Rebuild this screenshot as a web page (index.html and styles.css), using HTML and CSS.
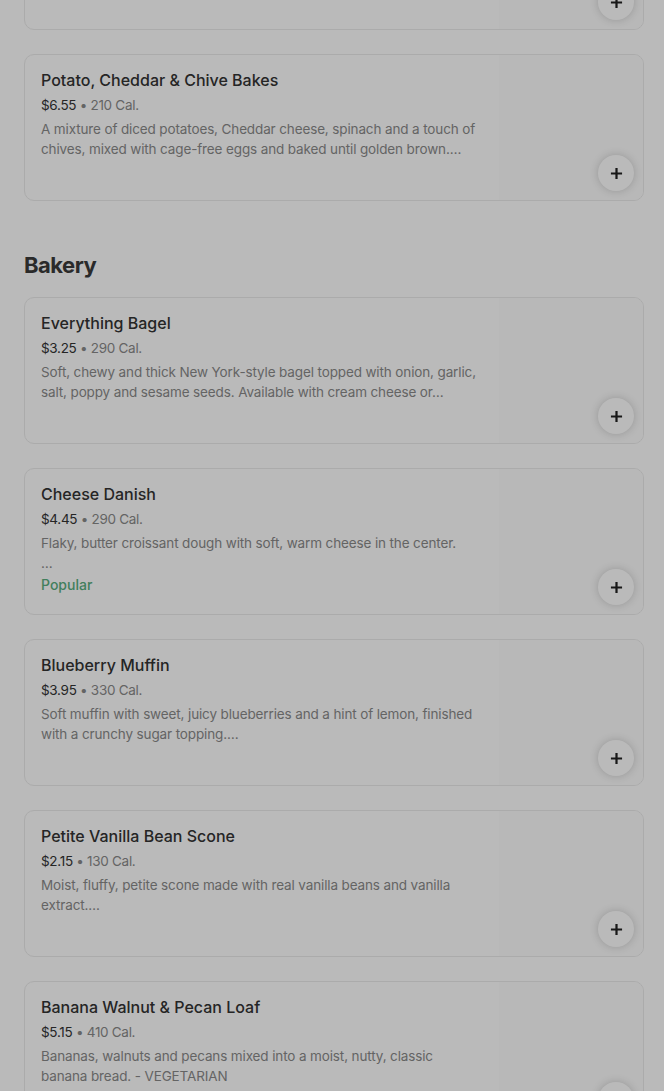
FILE: index.html
```html
<!DOCTYPE html>
<html lang="en">
<head>
  <meta charset="UTF-8">
  <meta name="viewport" content="width=device-width, initial-scale=1.0">
  <title>Menu</title>
  <link rel="stylesheet" href="styles.css">
</head>
<body>
  <main class="menu">
    <!-- Previous section, scrolled mostly out of view -->
    <section class="menu-section scrolled">
      <div class="item-card">
        <div class="item-info">
          <h3 class="item-name">Spinach, Feta &amp; Egg White Wrap</h3>
          <div class="item-meta"><span class="price">$5.25</span> &bull; 290 Cal.</div>
          <p class="item-desc">Cage-free egg whites with spinach, feta cheese and tomatoes in a whole-wheat wrap.…</p>
        </div>
        <div class="item-image"></div>
        <button class="add-btn" aria-label="Add"><svg viewBox="0 0 14 14"><path d="M7 1v12M1 7h12"/></svg></button>
      </div>

      <div class="item-card">
        <div class="item-info">
          <h3 class="item-name">Potato, Cheddar &amp; Chive Bakes</h3>
          <div class="item-meta"><span class="price">$6.55</span> &bull; 210 Cal.</div>
          <p class="item-desc">A mixture of diced potatoes, Cheddar cheese, spinach and a touch of chives, mixed with cage-free eggs and baked until golden brown.…</p>
        </div>
        <div class="item-image"></div>
        <button class="add-btn" aria-label="Add"><svg viewBox="0 0 14 14"><path d="M7 1v12M1 7h12"/></svg></button>
      </div>
    </section>

    <section class="menu-section">
      <h2 class="section-title">Bakery</h2>

      <div class="item-card">
        <div class="item-info">
          <h3 class="item-name">Everything Bagel</h3>
          <div class="item-meta"><span class="price">$3.25</span> &bull; 290 Cal.</div>
          <p class="item-desc">Soft, chewy and thick New York-style bagel topped with onion, garlic, salt, poppy and sesame seeds. Available with cream cheese or…</p>
        </div>
        <div class="item-image"></div>
        <button class="add-btn" aria-label="Add"><svg viewBox="0 0 14 14"><path d="M7 1v12M1 7h12"/></svg></button>
      </div>

      <div class="item-card">
        <div class="item-info">
          <h3 class="item-name">Cheese Danish</h3>
          <div class="item-meta"><span class="price">$4.45</span> &bull; 290 Cal.</div>
          <p class="item-desc">Flaky, butter croissant dough with soft, warm cheese in the center.<br>…</p>
          <div class="tag">Popular</div>
        </div>
        <div class="item-image"></div>
        <button class="add-btn" aria-label="Add"><svg viewBox="0 0 14 14"><path d="M7 1v12M1 7h12"/></svg></button>
      </div>

      <div class="item-card">
        <div class="item-info">
          <h3 class="item-name">Blueberry Muffin</h3>
          <div class="item-meta"><span class="price">$3.95</span> &bull; 330 Cal.</div>
          <p class="item-desc">Soft muffin with sweet, juicy blueberries and a hint of lemon, finished with a crunchy sugar topping.…</p>
        </div>
        <div class="item-image"></div>
        <button class="add-btn" aria-label="Add"><svg viewBox="0 0 14 14"><path d="M7 1v12M1 7h12"/></svg></button>
      </div>

      <div class="item-card">
        <div class="item-info">
          <h3 class="item-name">Petite Vanilla Bean Scone</h3>
          <div class="item-meta"><span class="price">$2.15</span> &bull; 130 Cal.</div>
          <p class="item-desc">Moist, fluffy, petite scone made with real vanilla beans and vanilla extract.…</p>
        </div>
        <div class="item-image"></div>
        <button class="add-btn" aria-label="Add"><svg viewBox="0 0 14 14"><path d="M7 1v12M1 7h12"/></svg></button>
      </div>

      <div class="item-card">
        <div class="item-info">
          <h3 class="item-name">Banana Walnut &amp; Pecan Loaf</h3>
          <div class="item-meta"><span class="price">$5.15</span> &bull; 410 Cal.</div>
          <p class="item-desc">Bananas, walnuts and pecans mixed into a moist, nutty, classic banana bread. - VEGETARIAN</p>
        </div>
        <div class="item-image"></div>
        <button class="add-btn" aria-label="Add"><svg viewBox="0 0 14 14"><path d="M7 1v12M1 7h12"/></svg></button>
      </div>
    </section>
  </main>

  <!-- Modal backdrop dimming the page -->
  <div class="backdrop"></div>
</body>
</html>
```

FILE: styles.css
```css
body {
  font-family: Inter, "Noto Sans", Arial, sans-serif;
  background-color: #ffffff;
  color: #333333;
  margin: 0;
  overflow: hidden;
}
.menu {
  padding: 0 20px 0 24px;
  margin-top: -117px;
}
.menu-section {
  display: flex;
  flex-direction: column;
  gap: 24px;
}
.section-title {
  font-size: 22px;
  line-height: 32px;
  font-weight: 700;
  letter-spacing: -0.5px;
  color: #3a3a3a;
  margin: 48px 0 -8px;
}
.item-card {
  position: relative;
  display: flex;
  height: 147px;
  box-sizing: border-box;
  border: 1px solid #ebebeb;
  border-radius: 10px;
  overflow: hidden;
}
.item-info {
  flex: 1;
  padding: 14px 18px 0 16px;
  min-width: 0;
}
.item-name {
  margin: 0;
  font-size: 16px;
  line-height: 22px;
  font-weight: 500;
  color: #333333;
}
.item-meta {
  margin-top: 4px;
  font-size: 13.5px;
  line-height: 20px;
  letter-spacing: -0.3px;
  color: #8a8a8a;
}
.item-meta .price {
  color: #333333;
}
.item-desc {
  margin: 4px 0 0;
  font-size: 13.5px;
  line-height: 20px;
  letter-spacing: -0.13px;
  color: #8a8a8a;
  display: -webkit-box;
  -webkit-line-clamp: 2;
  -webkit-box-orient: vertical;
  overflow: hidden;
}
.tag {
  margin-top: 2px;
  font-size: 14px;
  line-height: 20px;
  font-weight: 500;
  color: #5aae80;
}
.item-image {
  width: 144px;
  flex-shrink: 0;
  background-color: #fcfcfc;
}
.add-btn {
  position: absolute;
  right: 9px;
  bottom: 9px;
  width: 36px;
  height: 36px;
  border: none;
  border-radius: 50%;
  background-color: #ffffff;
  box-shadow: 0 0 8px rgba(0, 0, 0, 0.18);
  display: flex;
  align-items: center;
  justify-content: center;
  padding: 0;
  cursor: pointer;
}
.add-btn svg {
  width: 13px;
  height: 13px;
  stroke: #222222;
  stroke-width: 2.4;
  fill: none;
}
.backdrop {
  position: fixed;
  inset: 0;
  background-color: rgba(0, 0, 0, 0.27);
}
```
